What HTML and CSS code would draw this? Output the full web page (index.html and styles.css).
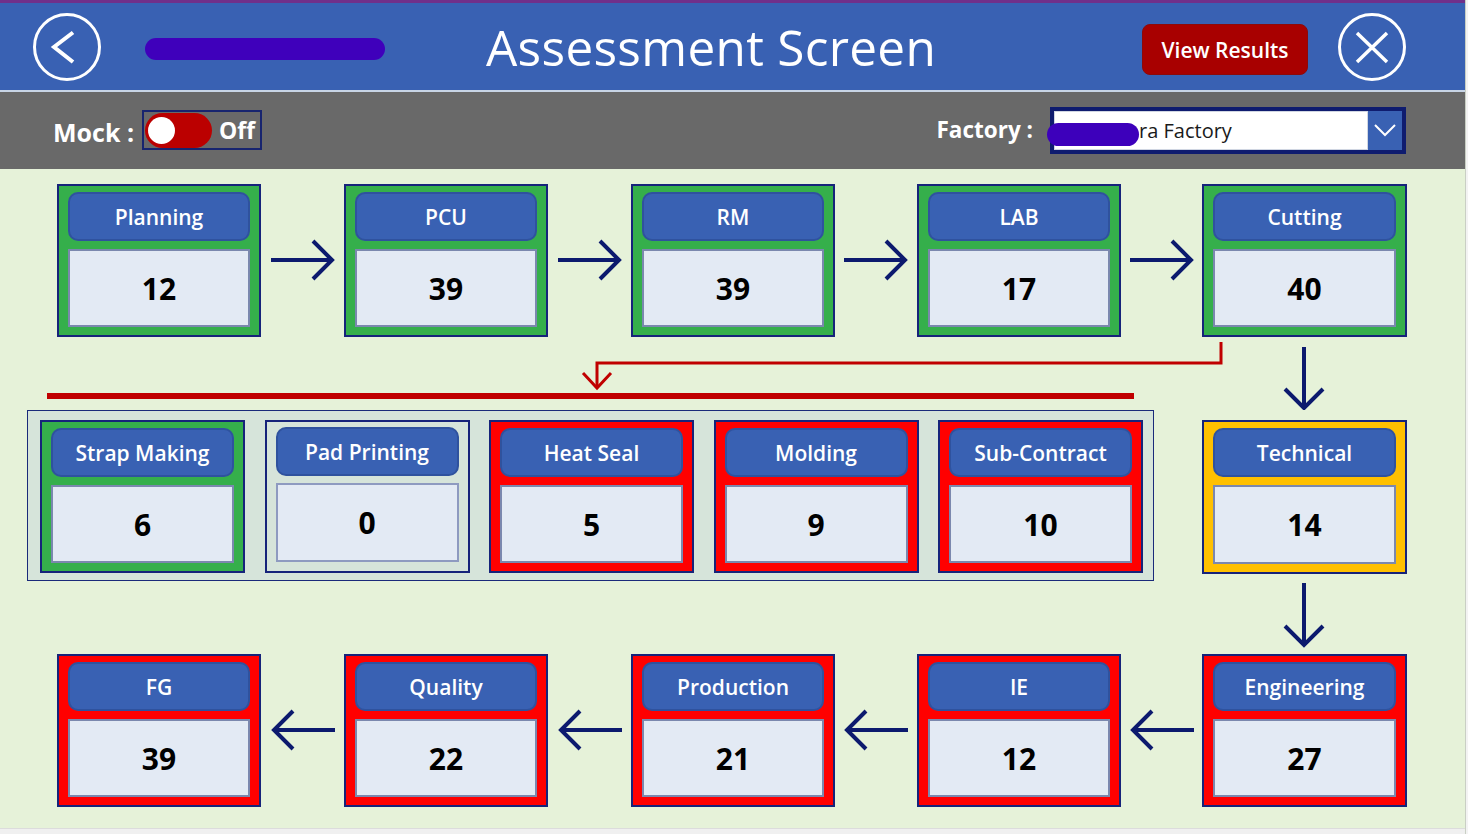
FILE: index.html
```html
<!DOCTYPE html>
<html lang="en">
<head>
<meta charset="utf-8">
<title>Assessment Screen</title>
<link rel="stylesheet" href="styles.css">
</head>
<body>
<div class="app">
  <div class="topline"></div>
  <header class="header">
    <button class="circle-btn" aria-label="Back">
      <svg width="70" height="70" viewBox="0 0 70 70"><circle cx="35" cy="35" r="32.5" fill="none" stroke="#fff" stroke-width="3"/><polyline points="41,20.5 22,35 41,50" fill="none" stroke="#fff" stroke-width="4"/></svg>
    </button>
    <div class="redact-bar"></div>
    <h1 class="title">Assessment Screen</h1>
    <div class="spacer"></div>
    <button class="view-btn">View Results</button>
    <button class="circle-btn close-btn" aria-label="Close">
      <svg width="70" height="70" viewBox="0 0 70 70"><circle cx="35" cy="35" r="32.5" fill="none" stroke="#fff" stroke-width="3"/><path d="M20 21 L50 50 M50 21 L20 50" fill="none" stroke="#fff" stroke-width="3.5"/></svg>
    </button>
  </header>
  <div class="toolbar">
    <span class="tb-label">Mock :</span>
    <div class="toggle">
      <span class="toggle-track"><span class="toggle-knob"></span></span>
      <span class="toggle-text">Off</span>
    </div>
    <div class="spacer"></div>
    <span class="tb-label factory-label">Factory :</span>
    <div class="dropdown">
      <div class="dd-field">ra Factory</div>
      <div class="dd-chevron"><svg width="22" height="14" viewBox="0 0 22 14"><polyline points="1,2 11,12 21,2" fill="none" stroke="#fff" stroke-width="2"/></svg></div>
      <span class="dd-redact"></span>
    </div>
  </div>

  <main class="main">
    <div class="flow-row">
      <div class="card green"><div class="card-head">Planning</div><div class="card-val">12</div></div>
      <div class="arrow-slot"><svg width="66" height="42" viewBox="0 0 66 42"><path d="M1 21 H62 M43 2 L62 21 L43 40" fill="none" stroke="#0c1a6e" stroke-width="4"/></svg></div>
      <div class="card green"><div class="card-head">PCU</div><div class="card-val">39</div></div>
      <div class="arrow-slot"><svg width="66" height="42" viewBox="0 0 66 42"><path d="M1 21 H62 M43 2 L62 21 L43 40" fill="none" stroke="#0c1a6e" stroke-width="4"/></svg></div>
      <div class="card green"><div class="card-head">RM</div><div class="card-val">39</div></div>
      <div class="arrow-slot"><svg width="66" height="42" viewBox="0 0 66 42"><path d="M1 21 H62 M43 2 L62 21 L43 40" fill="none" stroke="#0c1a6e" stroke-width="4"/></svg></div>
      <div class="card green"><div class="card-head">LAB</div><div class="card-val">17</div></div>
      <div class="arrow-slot"><svg width="66" height="42" viewBox="0 0 66 42"><path d="M1 21 H62 M43 2 L62 21 L43 40" fill="none" stroke="#0c1a6e" stroke-width="4"/></svg></div>
      <div class="card green"><div class="card-head">Cutting</div><div class="card-val">40</div></div>
    </div>

    <svg class="connector" width="1466" height="73" viewBox="0 0 1466 73">
      <path d="M1221 5 V26 H597 V50" fill="none" stroke="#c00000" stroke-width="3"/>
      <path d="M583 36 L597 51 L611 36" fill="none" stroke="#c00000" stroke-width="3"/>
      <rect x="47" y="56" width="1087" height="6" fill="#c00000"/>
      <path d="M1304 10 V71 M1285 52 L1304 71 L1323 52" fill="none" stroke="#0c1a6e" stroke-width="4"/>
    </svg>

    <div class="mid-row">
      <div class="group">
        <div class="card green"><div class="card-head">Strap Making</div><div class="card-val">6</div></div>
        <div class="card plain"><div class="card-head">Pad Printing</div><div class="card-val">0</div></div>
        <div class="card red"><div class="card-head">Heat Seal</div><div class="card-val">5</div></div>
        <div class="card red"><div class="card-head">Molding</div><div class="card-val">9</div></div>
        <div class="card red"><div class="card-head">Sub-Contract</div><div class="card-val">10</div></div>
      </div>
      <div class="card yellow technical"><div class="card-head">Technical</div><div class="card-val">14</div></div>
    </div>

    <svg class="connector" width="1466" height="73" viewBox="0 0 1466 73">
      <path d="M1304 2 V64 M1285 45 L1304 64 L1323 45" fill="none" stroke="#0c1a6e" stroke-width="4"/>
    </svg>

    <div class="flow-row">
      <div class="card red"><div class="card-head">FG</div><div class="card-val">39</div></div>
      <div class="arrow-slot"><svg width="66" height="42" viewBox="0 0 66 42"><path d="M65 21 H4 M23 2 L4 21 L23 40" fill="none" stroke="#0c1a6e" stroke-width="4"/></svg></div>
      <div class="card red"><div class="card-head">Quality</div><div class="card-val">22</div></div>
      <div class="arrow-slot"><svg width="66" height="42" viewBox="0 0 66 42"><path d="M65 21 H4 M23 2 L4 21 L23 40" fill="none" stroke="#0c1a6e" stroke-width="4"/></svg></div>
      <div class="card red"><div class="card-head">Production</div><div class="card-val">21</div></div>
      <div class="arrow-slot"><svg width="66" height="42" viewBox="0 0 66 42"><path d="M65 21 H4 M23 2 L4 21 L23 40" fill="none" stroke="#0c1a6e" stroke-width="4"/></svg></div>
      <div class="card red"><div class="card-head">IE</div><div class="card-val">12</div></div>
      <div class="arrow-slot"><svg width="66" height="42" viewBox="0 0 66 42"><path d="M65 21 H4 M23 2 L4 21 L23 40" fill="none" stroke="#0c1a6e" stroke-width="4"/></svg></div>
      <div class="card red"><div class="card-head">Engineering</div><div class="card-val">27</div></div>
    </div>
  </main>
  <div class="footer-strip"></div>
</div>
</body>
</html>
```

FILE: styles.css
```css
* { box-sizing: border-box; margin: 0; padding: 0; }

body {
  width: 1468px;
  height: 834px;
  overflow: hidden;
  background: #f3f3f3;
  font-family: "Open Sans", "Noto Sans", sans-serif;
}

.app {
  width: 1466px;
  border-right: 1px solid #c9cfc4;
}

.topline {
  height: 3px;
  background: #70308a;
}

.header {
  height: 89px;
  background: #3961b3;
  border-bottom: 2px solid #c8d5e6;
  display: flex;
  align-items: center;
  padding-left: 32px;
  padding-right: 58px;
}

.circle-btn {
  width: 70px;
  height: 70px;
  background: none;
  border: none;
  display: flex;
}

.redact-bar {
  width: 240px;
  height: 22px;
  border-radius: 11px;
  background: #3f00bb;
  margin-left: 43px;
  margin-top: 4px;
}

.title {
  margin-left: 101px;
  color: #fff;
  font-weight: 400;
  font-size: 49.5px;
  line-height: 1;
  letter-spacing: 0.3px;
  margin-top: 2px;
}

.spacer { flex: 1; }

.view-btn {
  width: 166px;
  height: 51px;
  background: #a80000;
  border: 1px solid #8c0a0a;
  border-radius: 8px;
  color: #fff;
  font-family: "Open Sans", "Noto Sans", sans-serif;
  font-weight: 600;
  font-size: 21px;
  margin-top: 6px;
}

.close-btn {
  margin-left: 29px;
}

.toolbar {
  height: 77px;
  background: #696969;
  display: flex;
  align-items: center;
  padding-left: 53px;
  padding-right: 59px;
}

.tb-label {
  color: #fff;
  font-weight: 700;
  font-size: 25px;
  margin-top: 2px;
}

.factory-label {
  font-size: 22.5px;
  margin-top: -2px;
}

.toggle {
  margin-left: 8px;
  width: 120px;
  height: 40px;
  border: 2px solid #17246f;
  display: flex;
  align-items: center;
  padding-left: 1px;
  margin-top: -1px;
}

.toggle-track {
  width: 67px;
  height: 35px;
  border-radius: 18px;
  background: #bb0000;
  display: flex;
  align-items: center;
  padding-left: 3px;
}

.toggle-knob {
  width: 27px;
  height: 27px;
  border-radius: 50%;
  background: #fff;
}

.toggle-text {
  color: #fff;
  font-weight: 700;
  font-size: 23px;
  margin-left: 7px;
}

.dropdown {
  position: relative;
  margin-left: 17px;
  width: 356px;
  height: 47px;
  border: 4px solid #0f1c6f;
  display: flex;
  background: #fff;
  margin-top: -1px;
}

.dd-field {
  flex: 1;
  display: flex;
  align-items: center;
  padding-left: 84px;
  font-size: 20px;
  color: #1a1a1a;
  border: 1px solid #d0d6e2;
}

.dd-chevron {
  width: 34px;
  background: #3961b3;
  display: flex;
  align-items: center;
  justify-content: center;
}

.dd-redact {
  position: absolute;
  left: -7px;
  top: 12px;
  width: 92px;
  height: 23px;
  border-radius: 12px;
  background: #3d00bb;
}

.main {
  height: 659px;
  background: #e6f2d9;
  padding-top: 15px;
}

.flow-row {
  display: grid;
  grid-template-columns: 204px 83px 204px 83px 204px 82px 204px 81px 205px;
  margin-left: 57px;
}

.arrow-slot {
  display: flex;
  align-items: center;
  justify-content: center;
  padding-bottom: 1px;
}

.card {
  height: 153px;
  border: 2px solid #16237a;
  padding: 6px 9px 8px;
  display: flex;
  flex-direction: column;
  gap: 8px;
}

.card.green { background: #35af4b; }
.card.red { background: #ff0000; }
.card.yellow { background: #ffc000; }
.card.plain { background: #d6e4da; padding-top: 5px; gap: 7px; padding-bottom: 9px; }

.card-head {
  height: 49px;
  border-radius: 10px;
  background: #3961b3;
  border: 2px solid #2f529e;
  color: #fff;
  font-weight: 600;
  font-size: 21px;
  display: flex;
  align-items: center;
  justify-content: center;
}

.card-val {
  flex: 1;
  background: #e3eaf4;
  border: 2px solid #7b88ae;
  display: flex;
  align-items: center;
  justify-content: center;
  font-weight: 700;
  font-size: 30px;
  color: #000;
}

.card.plain .card-val { border-color: #8e9ac0; }

.connector { display: block; }

.mid-row {
  display: flex;
  align-items: flex-start;
  padding-left: 27px;
}

.group {
  width: 1127px;
  height: 171px;
  background: #d6e4da;
  border: 1px solid #1a2a7a;
  padding: 9px 12px 7px;
  display: grid;
  grid-template-columns: repeat(5, 205px);
  column-gap: 19.5px;
}

.technical {
  width: 205px;
  margin-left: 48px;
  margin-top: 10px;
  height: 154px;
}

.footer-strip {
  height: 6px;
  background: #f0f0f0;
  border-top: 1px solid #dcdcdc;
}
```
